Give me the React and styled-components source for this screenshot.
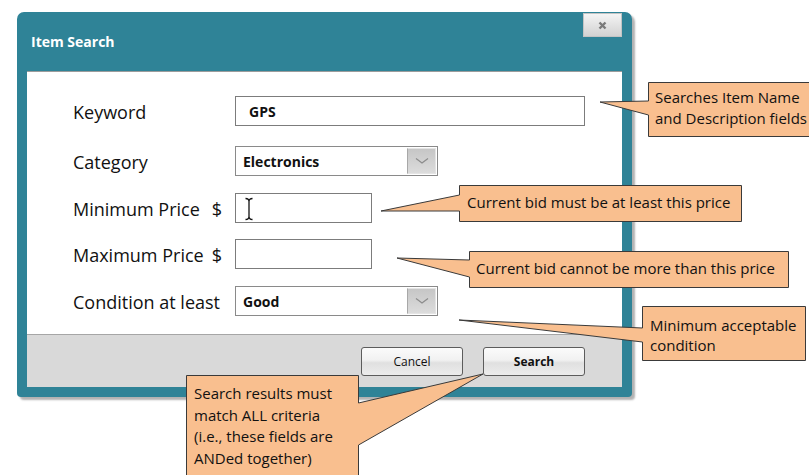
import React from 'react';
import styled, { createGlobalStyle } from 'styled-components';

const GlobalStyle = createGlobalStyle`
  html, body {
    margin: 0;
    padding: 0;
    background: #fff;
    overflow: hidden;
  }
  body {
    font-family: "Open Sans", "Noto Sans", sans-serif;
  }
`;

const Page = styled.div`
  position: relative;
  width: 809px;
  height: 475px;
  overflow: hidden;
  box-sizing: border-box;
  padding: 12px 0 0 17px;
`;

const Dialog = styled.div`
  width: 615px;
  height: 385px;
  box-sizing: border-box;
  background: #2f8397;
  border-radius: 7px 7px 4px 4px;
  box-shadow: 3px 3px 2px rgba(0, 0, 0, 0.3);
  padding: 0 10px 10px 10px;
  display: flex;
  flex-direction: column;
`;

const TitleBar = styled.div`
  height: 59px;
  display: flex;
  align-items: center;
  justify-content: space-between;
  flex-shrink: 0;
`;

const Title = styled.div`
  padding-left: 4px;
  color: #fff;
  font-weight: 700;
  font-size: 14px;
`;

const CloseButton = styled.div`
  align-self: flex-start;
  margin-top: 1px;
  width: 39px;
  height: 24px;
  box-sizing: border-box;
  border: 1px solid #c4c4c4;
  background: linear-gradient(#f4f4f4, #d2d2d2);
  display: flex;
  align-items: center;
  justify-content: center;
`;

const Content = styled.div`
  flex: 1;
  background: #fff;
  border-top: 1px solid #9c9c9c;
  padding: 24px 0 0 46px;
`;

const Field = styled.div`
  display: flex;
  align-items: center;
  height: 30px;
  margin-top: ${(p) => p.$gap || 0}px;
`;

const Label = styled.div`
  width: 162px;
  box-sizing: border-box;
  padding-right: 13px;
  padding-top: 1px;
  display: flex;
  font-size: 18px;
  color: #111;
`;

const Dollar = styled.span`
  margin-left: auto;
`;

const TextBox = styled.div`
  position: relative;
  width: ${(p) => p.$width}px;
  height: 30px;
  box-sizing: border-box;
  border: 1px solid #7c7c7c;
  display: flex;
  align-items: center;
  padding-left: ${(p) => p.$pad || 8}px;
  font-size: 14px;
  font-weight: 700;
  color: #111;
`;

const Cursor = styled.svg`
  position: absolute;
  left: 8px;
  top: 3px;
`;

const Select = styled.div`
  width: 203px;
  height: 30px;
  box-sizing: border-box;
  border: 1px solid #8a8a8a;
  display: flex;
  align-items: center;
  font-size: 14px;
  font-weight: 700;
  color: #111;
`;

const SelectValue = styled.div`
  flex: 1;
  padding-left: 7px;
`;

const DropButton = styled.div`
  width: 29px;
  height: 26px;
  margin: 1px;
  box-sizing: border-box;
  border: 1px solid #e4e4e4;
  border-left: 1px solid #a8a8a8;
  background: linear-gradient(#c6c6c6, #dcdcdc);
  display: flex;
  align-items: center;
  justify-content: center;
`;

const ButtonStrip = styled.div`
  height: 53px;
  flex-shrink: 0;
  box-sizing: border-box;
  background: #d9d9d9;
  border-top: 1px solid #a6a6a6;
  display: flex;
  align-items: center;
  justify-content: flex-end;
  gap: 20px;
  padding-right: 37px;
`;

const Button = styled.div`
  width: 102px;
  height: 29px;
  box-sizing: border-box;
  border: 1px solid #5c5c5c;
  border-radius: 3px;
  background: linear-gradient(#fbfbfb 0%, #f1f1f1 45%, #e0e0e0 55%, #ececec 100%);
  display: flex;
  align-items: center;
  justify-content: center;
  font-size: 12px;
  font-weight: ${(p) => (p.$primary ? 700 : 400)};
  color: #111;
`;

const Overlay = styled.svg`
  position: absolute;
  left: 0;
  top: 0;
  pointer-events: none;
`;

const CalloutText = styled.div`
  position: absolute;
  left: ${(p) => p.$x}px;
  top: ${(p) => p.$y}px;
  font-size: 15px;
  line-height: ${(p) => p.$lh || 21}px;
  color: #111;
  white-space: nowrap;
`;

const callouts = [
  {
    d: 'M648.5,82.5 H812 V136.5 H648.5 V115 L600,102 L648.5,101 Z',
    x: 655,
    y: 87,
    lines: ['Searches Item Name', 'and Description fields'],
  },
  {
    d: 'M459.5,185.5 H741.5 V221.5 H459.5 V211 L381,211 L459.5,195 Z',
    x: 467,
    y: 192,
    lines: ['Current bid must be at least this price'],
  },
  {
    d: 'M469.5,251.5 H788.5 V287.5 H469.5 V277 L397,258 L469.5,260 Z',
    x: 476,
    y: 258,
    lines: ['Current bid cannot be more than this price'],
  },
  {
    d: 'M642.5,306.5 H805.5 V360.5 H642.5 V342 L459,320 L642.5,328 Z',
    x: 650,
    y: 315,
    lh: 20,
    lines: ['Minimum acceptable', 'condition'],
  },
  {
    d: 'M186.5,375.5 H358.5 V403 L483,374 L358.5,445 V480 H186.5 Z',
    x: 194,
    y: 383,
    lh: 21.7,
    lines: ['Search results must', 'match ALL criteria', '(i.e., these fields are', 'ANDed together)'],
  },
];

function Chevron() {
  return (
    <svg width="14" height="8" viewBox="0 0 14 8">
      <path d="M1 1.5 L7 6 L13 1.5" fill="none" stroke="#8c8c8c" strokeWidth="1.2" />
    </svg>
  );
}

export default function App() {
  return (
    <>
      <GlobalStyle />
      <Page>
        <Dialog>
          <TitleBar>
            <Title>Item Search</Title>
            <CloseButton>
              <svg width="9" height="9" viewBox="0 0 9 9">
                <path d="M1.5 1.5 L7.5 7.5 M7.5 1.5 L1.5 7.5" stroke="#7a7a7a" strokeWidth="2.4" />
              </svg>
            </CloseButton>
          </TitleBar>
          <Content>
            <Field>
              <Label>Keyword</Label>
              <TextBox $width={350} $pad={13}>GPS</TextBox>
            </Field>
            <Field $gap={20}>
              <Label>Category</Label>
              <Select>
                <SelectValue>Electronics</SelectValue>
                <DropButton>
                  <Chevron />
                </DropButton>
              </Select>
            </Field>
            <Field $gap={17}>
              <Label>
                Minimum Price<Dollar>$</Dollar>
              </Label>
              <TextBox $width={137}>
                <Cursor width="10" height="24" viewBox="0 0 10 24">
                  <path
                    d="M1.5 1.5 Q5 1.5 5 4.5 Q5 1.5 8.5 1.5 M5 4.5 V19.5 M1.5 22.5 Q5 22.5 5 19.5 Q5 22.5 8.5 22.5"
                    fill="none"
                    stroke="#111"
                    strokeWidth="1.3"
                  />
                </Cursor>
              </TextBox>
            </Field>
            <Field $gap={16}>
              <Label>
                Maximum Price<Dollar>$</Dollar>
              </Label>
              <TextBox $width={137} />
            </Field>
            <Field $gap={17}>
              <Label>Condition at least</Label>
              <Select>
                <SelectValue>Good</SelectValue>
                <DropButton>
                  <Chevron />
                </DropButton>
              </Select>
            </Field>
          </Content>
          <ButtonStrip>
            <Button>Cancel</Button>
            <Button $primary>Search</Button>
          </ButtonStrip>
        </Dialog>

        <Overlay width="809" height="475" viewBox="0 0 809 475">
          {callouts.map((c, i) => (
            <path key={i} d={c.d} fill="#f9bf8f" stroke="#3a3a3a" strokeWidth="1" />
          ))}
        </Overlay>
        {callouts.map((c, i) => (
          <CalloutText key={i} $x={c.x} $y={c.y} $lh={c.lh}>
            {c.lines.map((l, j) => (
              <div key={j}>{l}</div>
            ))}
          </CalloutText>
        ))}
      </Page>
    </>
  );
}
